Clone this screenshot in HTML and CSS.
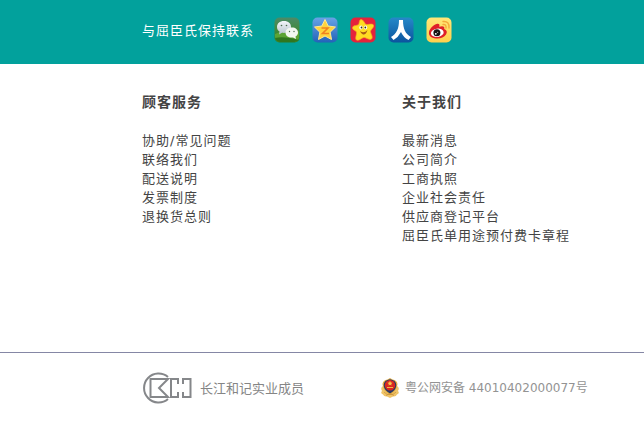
FILE: index.html
```html
<!DOCTYPE html>
<html lang="zh-CN">
<head>
<meta charset="utf-8">
<title>屈臣氏</title>
<link rel="stylesheet" href="styles.css">
</head>
<body>
<footer>
  <section class="social">
    <span class="social-label">与屈臣氏保持联系</span>
    <nav class="social-links">
      <a href="#" aria-label="微信">
        <svg viewBox="0 0 26 26">
          <defs>
            <linearGradient id="green" x2="0" y2="1"><stop offset="0" stop-color="#4b8a68"/><stop offset=".5" stop-color="#428a3c"/><stop offset="1" stop-color="#2d7a20"/></linearGradient>
            <linearGradient id="cloud" x2="0" y2="1"><stop offset="0" stop-color="#f4f6fb"/><stop offset="1" stop-color="#b5c3cb"/></linearGradient>
          </defs>
          <rect x=".5" y=".5" width="25" height="25" rx="5" fill="url(#green)"/>
          <path d="M1 17Q9 13 14 15T25 14V20Q25 25 20 25H6Q1 25 1 20Z" fill="#5ba334"/>
          <path d="M1 21Q10 19 25 23Q23 25 20 25H6Q2 25 1 21Z" fill="#30761f"/>
          <path d="M10 4C5.500 4 3 6.600 3 10C3 12 4 13.500 5.500 14.500L5 17.500L8 15.800C13 16.600 17 14 17 10C17 6.500 14.500 4 10 4Z" fill="url(#cloud)"/>
          <path d="M18 10.500C14 10.500 11.500 12.700 11.500 15.600C11.500 19 14.500 21 19 20.500L22 22L21.500 19.600C23.200 18.600 24 17.200 24 15.500C24 12.600 21.600 10.500 18 10.500Z" fill="#f2f7ef"/>
          <g fill="#4a6b4d"><circle cx="7.500" cy="8.500" r=".8"/><circle cx="12.500" cy="8.500" r=".8"/><circle cx="15.500" cy="14.500" r=".7"/><circle cx="20" cy="14.500" r=".7"/></g>
        </svg>
      </a>
      <a href="#" aria-label="QQ空间">
        <svg viewBox="0 0 26 26">
          <defs><linearGradient id="blue" x2="0" y2="1"><stop offset="0" stop-color="#68a3e6"/><stop offset="1" stop-color="#2263b9"/></linearGradient></defs>
          <rect x=".5" y=".5" width="25" height="25" rx="5" fill="url(#blue)"/>
          <path d="M13 2.500L16.200 9L23.500 10L18.200 15.200L19.500 22.500L13 19L6.500 22.500L7.800 15.200L2.500 10L9.800 9Z" fill="#ffd43d" stroke="#ffe894" stroke-linejoin="round"/>
          <path d="M9.500 11H16L10.500 16.500H17" fill="none" stroke="#f08220" stroke-width="1.600"/>
        </svg>
      </a>
      <a href="#" aria-label="点评">
        <svg viewBox="0 0 26 26">
          <rect x=".5" y=".5" width="25" height="25" rx="5" fill="#e5233c"/>
          <path d="M11 2.500C13.500 2.500 14.500 6.500 16 7.500C17.500 8 22.500 6 23.500 8C24.500 10.500 20.500 12.500 20.500 14.500C20.500 16.500 23.500 20 21.500 22C19.500 23.500 16 20.500 14 20.500C12 20.500 8.500 24.500 6.500 23C4.500 21.500 7 17.500 6.500 15C6 13.500 2 13 2.500 10.500C3 8 7 9 8.500 7.500C9.500 6.500 9 2.500 11 2.500Z" fill="#ffdc22" stroke="#f3a91d" stroke-width=".7"/>
          <ellipse cx="11" cy="10.500" rx="1.700" ry="2" fill="#fff"/><ellipse cx="15.500" cy="10.500" rx="1.700" ry="2" fill="#fff"/>
          <circle cx="11.500" cy="10.500" r=".9" fill="#403016"/><circle cx="15.300" cy="10.500" r=".9" fill="#403016"/>
          <path d="M10 14Q14 17 17.500 13Q16 18 13 17.500Q11 17 10 14Z" fill="#a85b16"/>
        </svg>
      </a>
      <a href="#" aria-label="人人网">
        <svg viewBox="0 0 26 26">
          <defs><linearGradient id="navy" x2="0" y2="1"><stop offset="0" stop-color="#2689c9"/><stop offset="1" stop-color="#0b549e"/></linearGradient></defs>
          <rect x=".5" y=".5" width="25" height="25" rx="5" fill="url(#navy)"/>
          <path d="M11 3H15C15 12 17.500 17 23 20L20.500 23Q15 20 13 15Q10.500 20 5.500 23L3 20C8.500 16.500 11 12 11 3Z" fill="#fff"/>
        </svg>
      </a>
      <a href="#" aria-label="新浪微博">
        <svg viewBox="0 0 26 26">
          <defs><linearGradient id="gold" x2="0" y2="1"><stop offset="0" stop-color="#ffe778"/><stop offset="1" stop-color="#ffd04d"/></linearGradient></defs>
          <rect x=".5" y=".5" width="25" height="25" rx="5" fill="url(#gold)"/>
          <path d="M10.500 7C13 6 14 7.500 13.200 9.700C17 8.500 19 9.500 18.200 12C21 13 21.500 15 20 17.500C18 20.500 14 22 10 21.500C5 21 2.500 18.500 3 15C3.500 12 7 8 10.500 7Z" fill="#df2029"/>
          <ellipse cx="11.300" cy="15.800" rx="6.400" ry="4.200" transform="rotate(-8 11.300 15.800)" fill="#fff"/>
          <circle cx="10.900" cy="15.800" r="3.500" fill="#181313"/><circle cx="9.800" cy="16.800" r=".9" fill="#fff"/><circle cx="11.700" cy="15.200" r=".5" fill="#fff"/>
          <path d="M17 7.500Q20.500 7 20 11M17 4.500Q23.500 3.800 23 11" fill="none" stroke="#f4a93a" stroke-width="1.400" stroke-linecap="round"/>
        </svg>
      </a>
    </nav>
  </section>
  <section class="columns">
    <div class="column">
      <h2>顾客服务</h2>
      <ul>
        <li><a href="#">协助/常见问题</a></li>
        <li><a href="#">联络我们</a></li>
        <li><a href="#">配送说明</a></li>
        <li><a href="#">发票制度</a></li>
        <li><a href="#">退换货总则</a></li>
      </ul>
    </div>
    <div class="column">
      <h2>关于我们</h2>
      <ul>
        <li><a href="#">最新消息</a></li>
        <li><a href="#">公司简介</a></li>
        <li><a href="#">工商执照</a></li>
        <li><a href="#">企业社会责任</a></li>
        <li><a href="#">供应商登记平台</a></li>
        <li><a href="#">屈臣氏单用途预付费卡章程</a></li>
      </ul>
    </div>
  </section>
  <section class="legal">
    <div class="member">
      <svg class="member-logo" viewBox="0 0 50 32" fill="none" stroke="#85878a" stroke-width="2">
        <path d="M26 5A14.500 14.500 0 1 0 26 27"/>
        <path d="M8.500 7H26L17 16L26 25H8.500Z"/>
        <path d="M36 12V7H29V25H36V20M41 12V7H48.500V25H41V20"/>
      </svg>
      <span>长江和记实业成员</span>
    </div>
    <a class="record" href="#">
      <svg class="record-badge" viewBox="0 0 20 20">
        <path d="M3 8Q0 10 2 13Q0 15 3 16.500Q4 19 7 18.500L10 20L13 18.500Q16 19 17 16.500Q20 15 18 13Q20 10 17 8Z" fill="#efc468"/>
        <path d="M10 0L12.500 1.500Q17 2 17.500 6Q17 13 10 17Q3 13 2.500 6Q3 2 7.500 1.500Z" fill="#e5ae42"/>
        <path d="M10 1.200Q16 2 16.300 7Q16 12.500 10 15.500Q4 12.500 3.700 7Q4 2 10 1.200Z" fill="#293865"/>
        <circle cx="10" cy="7.200" r="5.200" fill="#d92822"/>
        <path d="M10 2.800L10.800 4.500L12.500 4.700L11.200 5.900L11.500 7.600L10 6.700L8.500 7.600L8.800 5.900L7.500 4.700L9.200 4.500Z" fill="#f8c84c"/>
        <path d="M7 9.500H13" stroke="#f2b846"/>
        <path d="M4 14Q7 17.500 10 16.500Q13 17.500 16 14M6 17.500L10 15.500L14 17.500" fill="none" stroke="#c98f38" stroke-width=".7"/>
      </svg>
      <span>粤公网安备 44010402000077号</span>
    </a>
  </section>
</footer>
</body>
</html>
```
FILE: styles.css
```css
body {
  margin: 0;
  background: #fff;
  color: #444;
  font-family: "DejaVu Sans", "Noto Sans CJK SC", sans-serif;
  font-size: 13px;
  line-height: 19px;
}

a {
  color: inherit;
  text-decoration: none;
}

svg {
  display: block;
}

.social,
.columns,
.legal {
  padding-left: 142px;
}

.social {
  display: flex;
  align-items: center;
  gap: 20px;
  height: 64px;
  box-sizing: border-box;
  padding-bottom: 4px;
  background: #02a19c;
}

.social-label {
  color: #fff;
  letter-spacing: 1px;
}

.social-links {
  display: flex;
  gap: 12px;
}

.social-links svg {
  width: 26px;
  height: 26px;
}

.columns {
  display: grid;
  grid-template-columns: 260px 1fr;
  min-height: 259px;
  padding-top: 29px;
  letter-spacing: 1px;
}

h2 {
  margin: 0 0 19px;
  font-size: 14px;
  line-height: 19px;
}

ul {
  margin: 0;
  padding: 0;
  list-style: none;
}

.legal {
  display: grid;
  grid-template-columns: 238px 1fr;
  align-items: center;
  padding-top: 19px;
  padding-bottom: 20px;
  border-top: 1px solid #8587a5;
}

.member,
.record {
  display: flex;
  align-items: center;
}

.member {
  gap: 8px;
  color: #858585;
}

.member-logo {
  width: 50px;
  height: 32px;
}

.record {
  gap: 5px;
  color: #939393;
  font-size: 12px;
}

.record-badge {
  width: 20px;
  height: 20px;
}
```
